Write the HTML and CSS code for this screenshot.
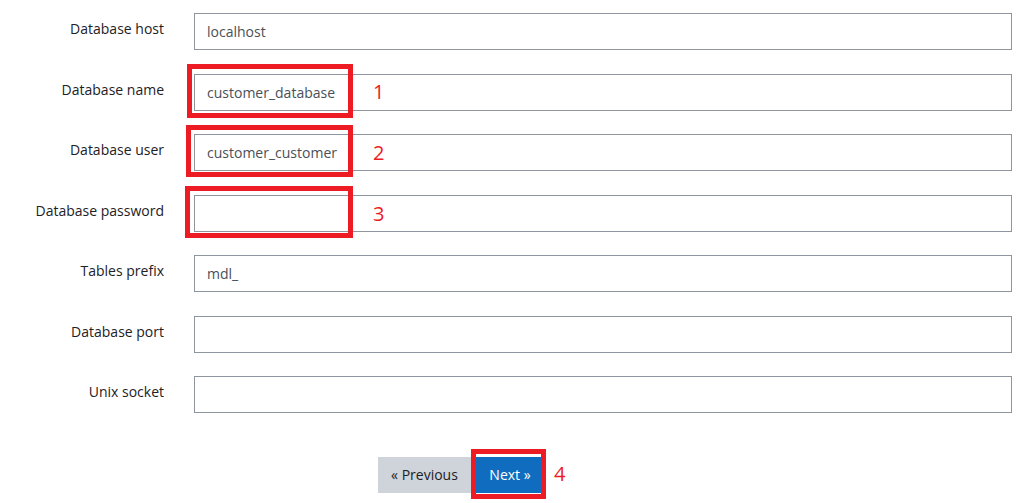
FILE: index.html
```html
<!DOCTYPE html>
<html lang="en">
<head>
<meta charset="utf-8">
<title>Database settings</title>
<link rel="stylesheet" href="styles.css">
</head>
<body>
<div class="page">
  <form class="form">
    <div class="row"><label class="label">Database host</label><input class="input" type="text" value="localhost"></div>
    <div class="row"><label class="label">Database name</label><input class="input" type="text" value="customer_database"></div>
    <div class="row"><label class="label">Database user</label><input class="input" type="text" value="customer_customer"></div>
    <div class="row"><label class="label">Database password</label><input class="input" type="text" value=""></div>
    <div class="row"><label class="label">Tables prefix</label><input class="input" type="text" value="mdl_"></div>
    <div class="row"><label class="label">Database port</label><input class="input" type="text" value=""></div>
    <div class="row"><label class="label">Unix socket</label><input class="input" type="text" value=""></div>
    <div class="buttons">
      <button type="button" class="btn btn-secondary">« Previous</button>
      <button type="button" class="btn btn-primary">Next »</button>
    </div>
  </form>
  <div class="mark mark-1"></div><span class="num num-1">1</span>
  <div class="mark mark-2"></div><span class="num num-2">2</span>
  <div class="mark mark-3"></div><span class="num num-3">3</span>
  <div class="mark mark-4"></div><span class="num num-4">4</span>
</div>
</body>
</html>
```
FILE: styles.css
```css
html, body {
  margin: 0;
  padding: 0;
  background: #ffffff;
}
body {
  font-family: "Open Sans", "Liberation Sans", sans-serif;
  font-size: 14px;
  color: #1d2125;
}
.page {
  position: relative;
  width: 1035px;
  height: 503px;
  overflow: hidden;
}
.form {
  padding-top: 13px;
}
.row {
  display: grid;
  grid-template-columns: 164px 818px;
  column-gap: 30px;
  height: 37px;
  margin-bottom: 23.5px;
}
.label {
  text-align: right;
  padding-top: 6px;
  line-height: 20px;
  color: #1d2125;
}
.input {
  box-sizing: border-box;
  width: 818px;
  height: 37px;
  margin: 0;
  border: 1px solid #8f959e;
  border-radius: 0;
  padding: 0 12px;
  font-family: inherit;
  font-size: 14px;
  color: #495057;
  background: #fff;
  outline: none;
}
.buttons {
  display: flex;
  gap: 4px;
  padding-left: 378px;
  margin-top: 44px;
}
.btn {
  height: 36px;
  border: 0;
  border-radius: 0;
  font-family: inherit;
  font-size: 14px;
  padding: 0 12px;
  line-height: 36px;
}
.btn-secondary {
  background: #ced4da;
  color: #1d2125;
  width: 93px;
}
.btn-primary {
  background: #0f6cbf;
  color: #ffffff;
  width: 70px;
}
.mark {
  position: absolute;
  box-sizing: border-box;
  border: 5px solid #ed1c24;
}
.mark-1 { left: 187px; top: 64px; width: 166px; height: 54px; }
.mark-2 { left: 186px; top: 125px; width: 167px; height: 52px; }
.mark-3 { left: 185px; top: 186px; width: 168px; height: 52px; }
.mark-4 { left: 471px; top: 449px; width: 75px; height: 50px; }
.num {
  position: absolute;
  font-family: "Open Sans", "Liberation Sans", sans-serif;
  font-size: 20px;
  line-height: 20px;
  color: #ed1c24;
}
.num-1 { left: 373px; top: 82px; }
.num-2 { left: 373px; top: 143px; }
.num-3 { left: 373px; top: 204px; }
.num-4 { left: 554px; top: 464px; }
```
